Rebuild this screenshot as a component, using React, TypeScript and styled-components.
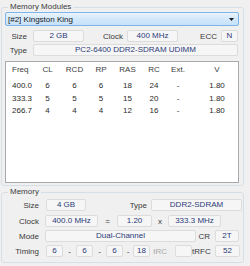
import React from 'react';
import styled, { createGlobalStyle } from 'styled-components';

const Global = createGlobalStyle`
  html, body { margin: 0; padding: 0; background: #f0f0f0; }
  body { font-family: "Liberation Sans", Arial, sans-serif; font-size: 8px; color: #333; }
`;

const Window = styled.div`
  width: 250px;
  height: 266px;
  box-sizing: border-box;
  background: #f0f0f0;
  padding: 7px 6px 0 1px;
  display: flex;
  flex-direction: column;
`;

const Group = styled.div<{ $mt?: number; $pt: number; $pb: number }>`
  position: relative;
  width: 243px;
  box-sizing: border-box;
  border: 1px solid #d5dfe5;
  border-radius: 3px;
  margin-top: ${p => p.$mt ?? 0}px;
  padding: ${p => p.$pt}px 4px ${p => p.$pb}px 3px;
  display: flex;
  flex-direction: column;
`;

const Legend = styled.span`
  position: absolute;
  top: -6px;
  left: 6px;
  padding: 0 2px;
  background: #f0f0f0;
  color: #3c3c3c;
  line-height: 10px;
`;

const Combo = styled.div`
  height: 14px;
  box-sizing: border-box;
  border: 1px solid #7eb4ea;
  border-radius: 2px;
  background: linear-gradient(#eaf4fd, #d3e8fb 50%, #c6e1f9);
  display: flex;
  align-items: center;
  justify-content: space-between;
  padding: 0 4px 0 2px;
  color: #1a1a1a;
`;

const Row = styled.div<{ $mt: number }>`
  display: flex;
  align-items: center;
  height: 12px;
  margin-top: ${p => p.$mt}px;
`;

const Label = styled.span<{ $w: number; $gap: number; $muted?: boolean }>`
  width: ${p => p.$w}px;
  margin-right: ${p => p.$gap}px;
  text-align: right;
  flex-shrink: 0;
  color: ${p => (p.$muted ? '#a8a8a8' : '#3a3a3a')};
  white-space: nowrap;
`;

const Sym = styled.span<{ $w: number }>`
  width: ${p => p.$w}px;
  text-align: center;
  flex-shrink: 0;
  color: #3a3a3a;
`;

const Field = styled.div<{ $w?: number; $mr?: number }>`
  ${p => (p.$w ? `width: ${p.$w}px; flex-shrink: 0;` : 'flex: 1;')}
  margin-right: ${p => p.$mr ?? 0}px;
  height: 12px;
  box-sizing: border-box;
  border: 1px solid #dcdcdc;
  border-radius: 2px;
  background: #f6f6f6;
  color: #2b3a78;
  text-align: center;
  line-height: 10px;
  white-space: nowrap;
  overflow: hidden;
`;

const Table = styled.div`
  margin-top: 5px;
  width: 234px;
  height: 122px;
  box-sizing: border-box;
  border: 1px solid #a7abb0;
  background: #fff;
  padding-top: 1px;
  display: flex;
  flex-direction: column;
`;

const TRow = styled.div<{ $h: number; $mt?: number }>`
  display: grid;
  grid-template-columns: 28px 27px 27px 26px 27px 26px 22px 1fr;
  height: ${p => p.$h}px;
  margin-top: ${p => p.$mt ?? 0}px;
  align-items: center;
`;

const Cell = styled.span<{ $head?: boolean }>`
  text-align: center;
  color: ${p => (p.$head ? '#3c3c3c' : '#2a2a2a')};
  white-space: nowrap;
  &:first-child { text-align: left; padding-left: 6px; }
  &:last-child { padding-left: 7px; }
`;

const headers = ['Freq', 'CL', 'RCD', 'RP', 'RAS', 'RC', 'Ext.', 'V'];
const rows = [
  ['400.0', '6', '6', '6', '18', '24', '-', '1.80'],
  ['333.3', '5', '5', '5', '15', '20', '-', '1.80'],
  ['266.7', '4', '4', '4', '12', '16', '-', '1.80'],
];

export default function App() {
  return (
    <>
      <Global />
      <Window>
        <Group $pt={4} $pb={2}>
          <Legend>Memory Modules</Legend>
          <Combo>
            <span>[#2] Kingston King</span>
            <svg width="5" height="3" viewBox="0 0 5 3">
              <polygon points="0,0 5,0 2.5,3" fill="#1a1a1a" />
            </svg>
          </Combo>
          <Row $mt={4}>
            <Label $w={22} $gap={6}>Size</Label>
            <Field $w={51}>2 GB</Field>
            <Label $w={39} $gap={4}>Clock</Label>
            <Field $w={51}>400 MHz</Field>
            <Label $w={39} $gap={4}>ECC</Label>
            <Field $w={17}>N</Field>
          </Row>
          <Row $mt={2}>
            <Label $w={22} $gap={6}>Type</Label>
            <Field $mr={1}>PC2-6400 DDR2-SDRAM UDIMM</Field>
          </Row>
          <Table>
            <TRow $h={12}>
              {headers.map(h => (
                <Cell key={h} $head>{h}</Cell>
              ))}
            </TRow>
            {rows.map((r, i) => (
              <TRow key={i} $h={12.5} $mt={i === 0 ? 4.5 : 0}>
                {r.map((c, j) => (
                  <Cell key={j}>{c}</Cell>
                ))}
              </TRow>
            ))}
          </Table>
        </Group>
        <Group $mt={6} $pt={6} $pb={5}>
          <Legend>Memory</Legend>
          <Row $mt={0}>
            <Label $w={34} $gap={7}>Size</Label>
            <Field $w={40}>4 GB</Field>
            <Label $w={61} $gap={4}>Type</Label>
            <Field $w={91}>DDR2-SDRAM</Field>
          </Row>
          <Row $mt={4}>
            <Label $w={34} $gap={6}>Clock</Label>
            <Field $w={53}>400.0 MHz</Field>
            <Sym $w={19}>=</Sym>
            <Field $w={35}>1.20</Field>
            <Sym $w={16}>x</Sym>
            <Field $w={53}>333.3 MHz</Field>
          </Row>
          <Row $mt={3}>
            <Label $w={34} $gap={6}>Mode</Label>
            <Field $w={151}>Dual-Channel</Field>
            <Label $w={14} $gap={5}>CR</Label>
            <Field $w={24}>2T</Field>
          </Row>
          <Row $mt={3}>
            <Label $w={34} $gap={7}>Timing</Label>
            <Field $w={17}>6</Field>
            <Sym $w={13}>-</Sym>
            <Field $w={17}>6</Field>
            <Sym $w={13}>-</Sym>
            <Field $w={17}>6</Field>
            <Sym $w={10}>-</Sym>
            <Field $w={17}>18</Field>
            <Label $w={17} $gap={8} $muted>tRC</Label>
            <Field $w={17}></Field>
            <Label $w={17} $gap={6}>tRFC</Label>
            <Field $w={25}>52</Field>
          </Row>
        </Group>
      </Window>
    </>
  );
}
